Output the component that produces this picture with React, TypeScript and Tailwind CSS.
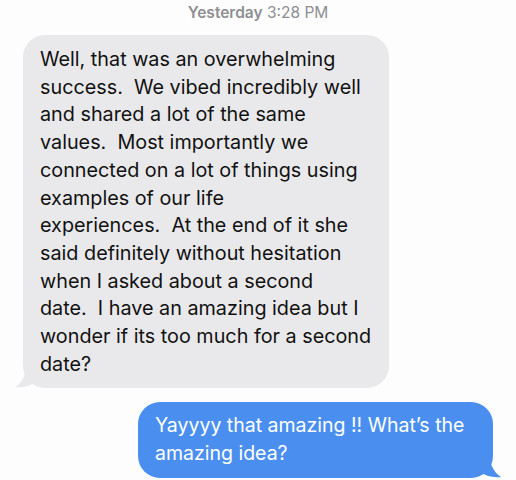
import React from 'react';

const greyLines = [
  'Well, that was an overwhelming',
  'success.  We vibed incredibly well',
  'and shared a lot of the same',
  'values.  Most importantly we',
  'connected on a lot of things using',
  'examples of our life',
  'experiences.  At the end of it she',
  'said definitely without hesitation',
  'when I asked about a second',
  'date.  I have an amazing idea but I',
  'wonder if its too much for a second',
  'date?',
];

const blueLines = ["Yayyyy that amazing !! What\u2019s the", 'amazing idea?'];

const App: React.FC = () => {
  return (
    <div className="w-[516px] h-[480px] bg-[#fdfdfd] overflow-hidden font-['Inter',sans-serif]">
      <div className="pt-[3px] text-center text-[15.5px] leading-[20px] text-[#8e8e93]">
        <span className="font-semibold">Yesterday</span> 3:28 PM
      </div>

      <div className="relative ml-[23px] mt-[12px] w-[366px]">
        <div className="relative z-10 rounded-[22px] bg-[#e9e9eb] pl-[17px] pr-[6px] pt-[11px] pb-[10px] text-[19.8px] leading-[27.7px] text-[#111] whitespace-pre">
          {greyLines.map((l, i) => (
            <div key={i}>{l}</div>
          ))}
        </div>
        <svg className="absolute left-[-8px] bottom-0 z-0" width="30" height="26" viewBox="0 0 30 26">
          <path d="M12 0 C12 10 8 20 0 25 C8 26 16 24 22 19 L30 0 Z" fill="#e9e9eb" />
        </svg>
      </div>

      <div className="relative ml-auto mr-[23px] mt-[14px] w-[355px]">
        <div className="relative z-10 rounded-[22px] bg-[#4a8ff0] pl-[17px] pr-[8px] pt-[10px] pb-[10px] text-[19.5px] leading-[27.7px] text-white whitespace-pre">
          {blueLines.map((l, i) => (
            <div key={i}>{l}</div>
          ))}
        </div>
        <svg className="absolute right-[-8px] bottom-0 z-0" width="30" height="26" viewBox="0 0 30 26">
          <path d="M18 0 C18 10 22 20 30 25 C22 26 14 24 8 19 L0 0 Z" fill="#4a8ff0" />
        </svg>
      </div>
    </div>
  );
};

export default App;
